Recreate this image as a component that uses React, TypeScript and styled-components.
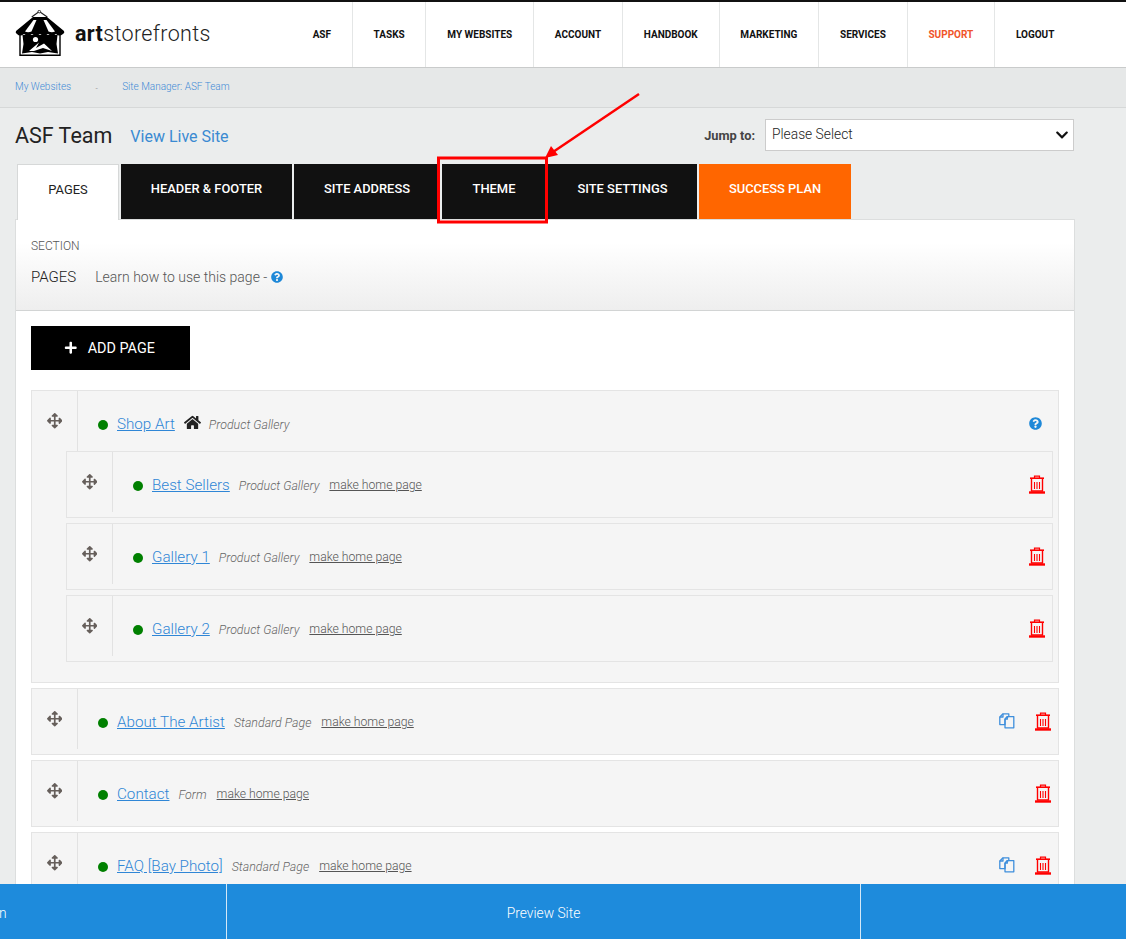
import React from 'react'
import styled, { createGlobalStyle } from 'styled-components'
import { FaArrowsAlt, FaChevronDown, FaHome, FaPlus, FaQuestionCircle } from 'react-icons/fa'

const GlobalStyle = createGlobalStyle`
  html, body { margin: 0; padding: 0; }
  body { font-family: Roboto, "Liberation Sans", sans-serif; background: #ebeded; }
  * { box-sizing: border-box; }
`

const Page = styled.div`
  position: relative;
  height: 939px;
  display: flex;
  flex-direction: column;
  overflow: hidden;
`

const Header = styled.header`
  height: 68px;
  flex: none;
  display: flex;
  align-items: stretch;
  justify-content: space-between;
  background: #fff;
  border-top: 2px solid #111;
  border-bottom: 1px solid #c9cbcb;
`

const Brand = styled.div`
  display: flex;
  align-items: center;
  gap: 10px;
  padding: 0 0 2px 15px;
`

const BrandName = styled.span`
  font-family: Roboto, sans-serif;
  font-size: 21.5px;
  font-weight: 300;
  letter-spacing: 0.35px;
  color: #222;
  b { font-weight: 700; color: #111; }
`

const Nav = styled.nav`
  display: flex;
  margin-right: 50.8px;
`

const NavItem = styled.a<{ $accent?: boolean; $plain?: boolean }>`
  display: flex;
  align-items: center;
  padding: 0 20.8px;
  font-size: 10px;
  font-weight: 700;
  color: ${p => (p.$accent ? '#f0552a' : '#111')};
  border-right: ${p => (p.$plain ? 'none' : '1px solid #e4e6e6')};
`

const Breadcrumbs = styled.div`
  height: 40px;
  flex: none;
  display: flex;
  align-items: center;
  padding: 0 0 2px 15px;
  font-size: 10px;
  font-weight: 300;
  background: #e6e8e8;
  border-bottom: 1px solid #d6d8d8;
`

const Crumb = styled.a`
  color: #3f8ad6;
`

const CrumbSep = styled.span`
  width: 51px;
  padding-top: 4px;
  text-align: center;
  font-size: 8px;
  color: #666;
`

const Main = styled.main`
  flex: 1;
  min-height: 0;
  overflow: hidden;
  padding: 0 51px 0 15px;
`

const TitleRow = styled.div`
  height: 56px;
  display: flex;
  align-items: center;
  padding-bottom: 2px;
`

const Title = styled.h1`
  margin: 0;
  font-size: 21.5px;
  font-weight: 400;
  color: #222;
`

const LiveLink = styled.a`
  margin-left: 18px;
  margin-top: 2px;
  font-size: 16px;
  color: #3a8ad2;
`

const JumpLabel = styled.label`
  margin-left: auto;
  margin-right: 10px;
  font-size: 12.8px;
  font-weight: 700;
  color: #444;
`

const JumpField = styled.div`
  position: relative;
  width: 309px;
  height: 32px;
  margin-right: 1px;
  svg {
    position: absolute;
    right: 5px;
    top: 9px;
    font-size: 14px;
    color: #111;
    pointer-events: none;
  }
`

const JumpSelect = styled.select`
  appearance: none;
  width: 100%;
  height: 100%;
  padding: 0 6px 2px;
  font-family: inherit;
  font-size: 13.8px;
  font-weight: 300;
  color: #222;
  background: #fff;
  border: 1px solid #ccc;
  border-radius: 0;
`

const Tabs = styled.div`
  display: flex;
  gap: 2px;
  height: 55px;
  padding-left: 2px;
`

const Tab = styled.a<{ $width: number; $active?: boolean; $accent?: boolean }>`
  width: ${p => p.$width}px;
  display: flex;
  align-items: center;
  justify-content: center;
  padding-bottom: 6px;
  font-size: 12.9px;
  font-weight: ${p => (p.$active ? 400 : 500)};
  color: ${p => (p.$active ? '#222' : '#fff')};
  background: ${p => (p.$active ? '#fff' : p.$accent ? '#ff6600' : '#111')};
  border: ${p => (p.$active ? '1px solid #d6d8d8' : 'none')};
  border-bottom: none;
  margin-bottom: ${p => (p.$active ? '-1px' : '0')};
  position: relative;
`

const Panel = styled.section`
  background: #fff;
  border: 1px solid #dcdede;
  border-bottom: none;
  height: 720px;
`

const SectionHead = styled.div`
  height: 91px;
  padding: 19px 15px 0;
  background: linear-gradient(#fff 25%, #eeeeee);
  border-bottom: 1px solid #d2d4d4;
`

const SectionLabel = styled.div`
  font-size: 12px;
  font-weight: 300;
  color: #555;
`

const SectionTitleRow = styled.div`
  display: flex;
  align-items: center;
  margin-top: 15px;
  font-size: 14px;
  font-weight: 300;
  color: #555;
`

const SectionTitle = styled.span`
  font-size: 15px;
  color: #222;
  margin-right: 19px;
`

const HelpIcon = styled(FaQuestionCircle)<{ $size?: number; $inset?: number }>`
  color: #1e88d8;
  font-size: ${p => p.$size ?? 12}px;
  margin-left: 4px;
  margin-right: ${p => p.$inset ?? 0}px;
`

const PanelBody = styled.div`
  padding: 15px;
`

const AddButton = styled.button`
  width: 159px;
  height: 44px;
  display: flex;
  align-items: center;
  justify-content: center;
  gap: 10px;
  padding: 0 2px 0 0;
  font-family: inherit;
  font-size: 14.4px;
  color: #fff;
  background: #000;
  border: none;
  svg { font-size: 13.5px; }
`

const PageList = styled.div`
  margin-top: 20px;
  display: flex;
  flex-direction: column;
  gap: 5px;
`

const Card = styled.div<{ $parent?: boolean }>`
  background: #f5f5f5;
  border: 1px solid #e4e4e4;
  height: ${p => (p.$parent ? '293px' : '67px')};
`

const CardRow = styled.div`
  height: 60px;
  display: flex;
  align-items: stretch;
`

const Handle = styled.div`
  width: 46px;
  flex: none;
  padding-top: 22px;
  text-align: center;
  border-right: 1px solid #e2e2e2;
  color: #665f5b;
  font-size: 15.5px;
  line-height: 15px;
`

const CardMain = styled.div`
  flex: 1;
  display: flex;
  align-items: center;
  padding: 6px 7px 0 20px;
  font-size: 12px;
`

const Dot = styled.span`
  width: 10px;
  height: 10px;
  border-radius: 50%;
  background: #008000;
  margin-right: 9px;
  margin-top: 2px;
`

const PageLink = styled.a`
  font-size: 15.2px;
  font-weight: 300;
  color: #2f86d6;
  text-decoration: underline;
  margin-right: 9px;
`

const HomeIcon = styled(FaHome)`
  font-size: 17px;
  color: #222;
  margin: -4px 8px 0 0;
`

const PageType = styled.span`
  font-size: 12.4px;
  font-weight: 300;
  font-style: italic;
  color: #666;
`

const MakeHome = styled.a`
  margin-left: 10px;
  font-size: 12.2px;
  font-weight: 300;
  color: #555;
  text-decoration: underline;
`

const Actions = styled.div`
  margin-left: auto;
  display: flex;
  align-items: center;
  gap: 20px;
  margin-top: -2px;
`

const Children = styled.div`
  display: flex;
  flex-direction: column;
  gap: 5px;
  margin-left: 34px;
  margin-right: 5px;
`

const Footer = styled.footer`
  height: 55px;
  flex: none;
  display: grid;
  grid-template-columns: 227px 634px 1fr;
  background: #1e8bdc;
  color: #fff;
  font-size: 13.8px;
  font-weight: 300;
`

const FooterCell = styled.a<{ $clipLeft?: boolean }>`
  display: flex;
  align-items: center;
  justify-content: ${p => (p.$clipLeft ? 'flex-start' : 'center')};
  padding-top: 2px;
  overflow: hidden;
  white-space: nowrap;
  border-right: 1px solid #d4e8f7;
  &:last-child { border-right: none; }
  span { margin-left: -1px; }
`

const Annotation = styled.svg`
  position: absolute;
  left: 0;
  top: 0;
  pointer-events: none;
`

const Logo = () => (
  <svg width="50" height="47" viewBox="0 0 50 47">
    <path d="M16.7 7 L24.3 1.5 L32.3 7" stroke="#222" strokeWidth="1.1" fill="none" />
    <circle cx="24.3" cy="1.6" r="1.3" fill="#fff" stroke="#222" strokeWidth="0.9" />
    <path d="M5 22 V45.2 H45 V22" fill="#fff" stroke="#000" strokeWidth="1.4" />
    <path d="M7.5 25 H42.5 L41.5 34 L43 43.5 L33 42 L25 43.5 L17 42 L7 43.5 L8.5 34 Z" fill="#000" />
    <path d="M18 7 H32 L49 21 Q50 23 48 24 Q44 27 41 24 Q37 27 33 24 Q29 27 25 24 Q21 27 17 24 Q13 27 9 24 Q5 27 2 24 Q0 23 1 21 Z" fill="#000" />
    <path d="M18.5 10 L10 21.5 Q13 23 16.5 21.5 L21.5 10 Z" fill="#fff" />
    <path d="M31.5 10 L40 21.5 Q37 23 33.5 21.5 L28.5 10 Z" fill="#fff" />
    <circle cx="20.5" cy="29.5" r="2.6" fill="#fff" />
    <path d="M14 41 L24 32.5 L21 38 L29 33.5 L37 41 L28 38 L19 41 Z" fill="#fff" />
  </svg>
)

const TrashGlyph = () => (
  <svg width="16" height="19" viewBox="0 0 16 19">
    <path d="M5.5 3 V1.2 H10.5 V3" fill="none" stroke="#f00" strokeWidth="1.2" />
    <path d="M1 3.2 H15" stroke="#f00" strokeWidth="1.6" />
    <path d="M2.5 3.5 V16 H13.5 V3.5" fill="none" stroke="#f00" strokeWidth="1.4" />
    <path d="M5.5 7 V14 M8 7 V14 M10.5 7 V14" stroke="#f00" strokeWidth="1.1" />
    <path d="M0 17.5 H16" stroke="#f00" strokeWidth="2.4" />
  </svg>
)

const CopyGlyph = () => (
  <svg width="16" height="16" viewBox="0 0 16 16">
    <g fill="none" stroke="#3f8fdc" strokeWidth="1.3" strokeLinejoin="round">
      <path d="M4 0.8 H9.8 V3.6 H8.3 L6 6.2 V11.6 H0.8 V4 Z" />
      <path d="M4 0.8 V4 H0.8" />
      <path d="M8.3 3.6 H14.8 V14.8 H6 V6.2 Z" />
      <path d="M8.3 3.6 V6.2 H6" />
    </g>
  </svg>
)

interface PageItem {
  name: string
  type: string
  copy?: boolean
}

const navItems = ['ASF', 'TASKS', 'MY WEBSITES', 'ACCOUNT', 'HANDBOOK', 'MARKETING', 'SERVICES', 'SUPPORT', 'LOGOUT']

const tabs = [
  { label: 'PAGES', width: 102, active: true },
  { label: 'HEADER & FOOTER', width: 171 },
  { label: 'SITE ADDRESS', width: 146 },
  { label: 'THEME', width: 104 },
  { label: 'SITE SETTINGS', width: 149 },
  { label: 'SUCCESS PLAN', width: 152, accent: true },
]

const children: PageItem[] = [
  { name: 'Best Sellers', type: 'Product Gallery' },
  { name: 'Gallery 1', type: 'Product Gallery' },
  { name: 'Gallery 2', type: 'Product Gallery' },
]

const topPages: PageItem[] = [
  { name: 'About The Artist', type: 'Standard Page', copy: true },
  { name: 'Contact', type: 'Form' },
  { name: 'FAQ [Bay Photo]', type: 'Standard Page', copy: true },
]

const PageRow = ({ item }: { item: PageItem }) => (
  <Card>
    <CardRow>
      <Handle><FaArrowsAlt /></Handle>
      <CardMain>
        <Dot />
        <PageLink>{item.name}</PageLink>
        <PageType>{item.type}</PageType>
        <MakeHome>make home page</MakeHome>
        <Actions>
          {item.copy && <CopyGlyph />}
          <TrashGlyph />
        </Actions>
      </CardMain>
    </CardRow>
  </Card>
)

const App = () => (
  <Page>
    <GlobalStyle />
    <Header>
      <Brand>
        <Logo />
        <BrandName><b>art</b>storefronts</BrandName>
      </Brand>
      <Nav>
        {navItems.map(n => (
          <NavItem key={n} $accent={n === 'SUPPORT'} $plain={n === 'LOGOUT'}>{n}</NavItem>
        ))}
      </Nav>
    </Header>
    <Breadcrumbs>
      <Crumb>My Websites</Crumb>
      <CrumbSep>-</CrumbSep>
      <Crumb>Site Manager: ASF Team</Crumb>
    </Breadcrumbs>
    <Main>
      <TitleRow>
        <Title>ASF Team</Title>
        <LiveLink>View Live Site</LiveLink>
        <JumpLabel>Jump to:</JumpLabel>
        <JumpField>
          <JumpSelect defaultValue="">
            <option value="">Please Select</option>
          </JumpSelect>
          <FaChevronDown />
        </JumpField>
      </TitleRow>
      <Tabs>
        {tabs.map(t => (
          <Tab key={t.label} $width={t.width} $active={t.active} $accent={t.accent}>{t.label}</Tab>
        ))}
      </Tabs>
      <Panel>
        <SectionHead>
          <SectionLabel>SECTION</SectionLabel>
          <SectionTitleRow>
            <SectionTitle>PAGES</SectionTitle>
            Learn how to use this page -
            <HelpIcon />
          </SectionTitleRow>
        </SectionHead>
        <PanelBody>
          <AddButton><FaPlus />ADD PAGE</AddButton>
          <PageList>
            <Card $parent>
              <CardRow>
                <Handle><FaArrowsAlt /></Handle>
                <CardMain>
                  <Dot />
                  <PageLink>Shop Art</PageLink>
                  <HomeIcon />
                  <PageType>Product Gallery</PageType>
                  <Actions><HelpIcon $size={13} $inset={9} /></Actions>
                </CardMain>
              </CardRow>
              <Children>
                {children.map(c => <PageRow key={c.name} item={c} />)}
              </Children>
            </Card>
            {topPages.map(p => <PageRow key={p.name} item={p} />)}
          </PageList>
        </PanelBody>
      </Panel>
    </Main>
    <Footer>
      <FooterCell $clipLeft><span>n</span></FooterCell>
      <FooterCell>Preview Site</FooterCell>
      <FooterCell />
    </Footer>
    <Annotation width="1126" height="939" viewBox="0 0 1126 939">
      <rect x="438.5" y="158" width="108" height="64" fill="none" stroke="#f00" strokeWidth="3" />
      <path d="M639 94 L553 152" stroke="#f00" strokeWidth="2.5" />
      <path d="M545 158 L551 146 L558 155 Z" fill="#f00" />
    </Annotation>
  </Page>
)

export default App
